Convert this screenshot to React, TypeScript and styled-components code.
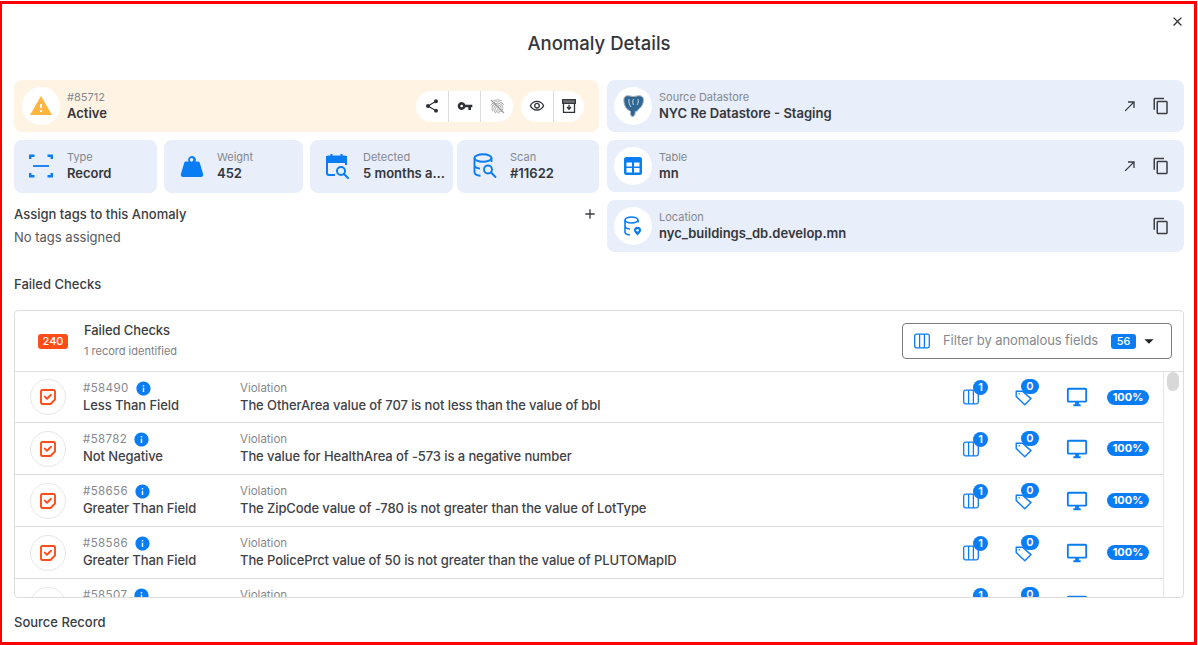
import React from "react";
import styled, { createGlobalStyle } from "styled-components";
import {
  MdAdd, MdArrowDropDown, MdCallMade, MdClose, MdContentCopy, MdInfo, MdOutlineDesktopWindows,
  MdOutlineVisibility, MdShare, MdVpnKey, MdWarning, MdFingerprint,
} from "react-icons/md";

const Global = createGlobalStyle`
  html, body { margin: 0; padding: 0; background: #fff; }
  body { font-family: "Inter", "Noto Sans", sans-serif; color: #2f3136; overflow: hidden; }
  * { box-sizing: border-box; }
`;

const BLUE = "#0A7CF4";

const Frame = styled.div`
  position: relative;
  margin-top: 1px;
  width: 1197px;
  height: 644px;
  border: solid #f00;
  border-width: 3px 3px 3px 2px;
  padding: 0 10px 0 12px;
  overflow: hidden;
`;
const Close = styled.button`
  position: absolute;
  top: 8px;
  right: 8px;
  width: 18px;
  height: 18px;
  padding: 0;
  border: 0;
  background: none;
  color: #333;
  display: flex;
  align-items: center;
  justify-content: center;
`;
const Title = styled.h1`
  margin: 0;
  height: 76px;
  padding-top: 26px;
  text-align: center;
  font-size: 18.5px;
  line-height: 26px;
  font-weight: 500;
  color: #33363b;
`;
const Columns = styled.div`
  display: grid;
  grid-template-columns: 585px 577px;
  column-gap: 8px;
  align-items: start;
`;
const Stack = styled.div`
  display: flex;
  flex-direction: column;
  gap: 8px;
`;
const Card = styled.div<{ $tone?: "blue" | "orange" }>`
  height: 52px;
  border-radius: 8px;
  background: ${(p) => (p.$tone === "orange" ? "#FFF3E3" : "#E8EEFA")};
  display: flex;
  align-items: center;
  padding: 0 14px 0 ${(p) => (p.$tone === "orange" ? 8 : 7)}px;
  gap: 7px;
`;
const Circle = styled.div`
  width: 38px;
  height: 38px;
  flex: none;
  border-radius: 50%;
  background: #fff;
  display: flex;
  align-items: center;
  justify-content: center;
`;
const Texts = styled.div`
  flex: 1;
  min-width: 0;
  display: flex;
  flex-direction: column;
  gap: 1px;
`;
const Label = styled.div`
  font-size: 11px;
  line-height: 14px;
  color: #85888e;
  white-space: nowrap;
`;
const Value = styled.div`
  font-size: 13px;
  line-height: 17px;
  font-weight: 600;
  color: #34373c;
  white-space: nowrap;
  overflow: hidden;
  text-overflow: ellipsis;
`;
const Actions = styled.div`
  display: flex;
  gap: 8px;
  margin-right: 1px;
`;
const ActionGroup = styled.div`
  display: flex;
  height: 31px;
  border-radius: 16px;
  background: #fff;
  overflow: hidden;
`;
const Action = styled.div<{ $w: number }>`
  width: ${(p) => p.$w}px;
  display: flex;
  align-items: center;
  justify-content: center;
  color: #2f3136;
  & + & { border-left: 1px solid #ddd; }
`;
const Metrics = styled.div`
  display: flex;
`;
const Metric = styled.div<{ $w: number; $after: number; $pad: number; $gap: number }>`
  width: ${(p) => p.$w}px;
  margin-right: ${(p) => p.$after}px;
  height: 53px;
  border-radius: 8px;
  background: #E8EEFA;
  display: flex;
  align-items: center;
  padding: 0 8px 1px ${(p) => p.$pad}px;
  gap: ${(p) => p.$gap}px;
  & > svg { flex: none; }
`;
const LinkIcons = styled.div`
  display: flex;
  align-items: center;
  gap: 14px;
  color: #3a3d42;
`;
const TagsBar = styled.div`
  display: flex;
  align-items: center;
  justify-content: space-between;
  height: 26px;
  padding-right: 1px;
`;
const TagsTitle = styled.div`
  font-size: 13px;
  line-height: 18px;
  font-weight: 500;
  color: #3a3d42;
`;
const TagsEmpty = styled.div`
  margin-top: 1px;
  font-size: 13px;
  line-height: 18px;
  color: #55585d;
`;
const Section = styled.div<{ $top: number }>`
  margin-top: ${(p) => p.$top}px;
  font-size: 13px;
  line-height: 20px;
  font-weight: 500;
  color: #3a3d42;
`;
const Table = styled.div`
  margin-top: 16px;
  height: 288px;
  border: 1px solid #ddd;
  border-radius: 4px;
  overflow: hidden;
  display: flex;
  flex-direction: column;
`;
const TableHead = styled.div`
  flex: none;
  height: 61px;
  border-bottom: 1px solid #ddd;
  display: flex;
  align-items: center;
  padding: 0 11px 0 23px;
`;
const Count = styled.span`
  width: 30px;
  height: 15px;
  border-radius: 3px;
  background: #FF4D1A;
  color: #fff;
  font-size: 11px;
  line-height: 15px;
  font-weight: 500;
  text-align: center;
`;
const HeadTexts = styled.div`
  flex: 1;
  margin-left: 16px;
  padding-bottom: 2px;
  display: flex;
  flex-direction: column;
  gap: 5px;
`;
const HeadTitle = styled.div`
  font-size: 13px;
  line-height: 17px;
  font-weight: 500;
  letter-spacing: -0.1px;
  color: #3a3d42;
`;
const HeadSub = styled.div`
  font-size: 11px;
  line-height: 14px;
  color: #7d8085;
`;
const Filter = styled.div`
  width: 270px;
  height: 36px;
  border: 1px solid #7b7b7b;
  border-radius: 4px;
  display: flex;
  align-items: center;
  padding: 0 11px 0 11px;
`;
const FilterText = styled.span`
  flex: 1;
  margin-left: 13px;
  padding-bottom: 2px;
  font-size: 13px;
  letter-spacing: -0.08px;
  color: #85888e;
  white-space: nowrap;
`;
const FilterCount = styled.span`
  width: 25px;
  height: 15px;
  border-radius: 3px;
  background: ${BLUE};
  color: #fff;
  font-size: 11px;
  line-height: 15px;
  font-weight: 500;
  text-align: center;
  margin-right: 2px;
`;
const Body = styled.div`
  flex: 1;
  min-height: 0;
  display: flex;
  overflow: hidden;
`;
const Rows = styled.div`
  flex: 1;
  min-width: 0;
`;
const Gutter = styled.div`
  flex: none;
  width: 20px;
  border-left: 1px solid #e6e6e6;
  padding: 0 4px 0 3px;
`;
const Thumb = styled.div`
  width: 12px;
  height: 19px;
  border-radius: 6px;
  background: #d8d8d8;
`;
const Row = styled.div`
  height: 52px;
  border-bottom: 1px solid #ddd;
  display: grid;
  grid-template-columns: 68px 157px 1fr 212px;
  align-items: center;
  &:first-child { height: 51px; }
`;
const CheckCell = styled.div`
  padding-left: 15px;
`;
const CheckCircle = styled.div`
  width: 36px;
  height: 36px;
  border-radius: 50%;
  border: 1px solid #e6e6e6;
  display: flex;
  align-items: center;
  justify-content: center;
`;
const CellStack = styled.div`
  display: flex;
  flex-direction: column;
  gap: 1px;
`;
const IdLine = styled.div`
  height: 15px;
  display: flex;
  align-items: center;
  gap: 6px;
  font-size: 11.5px;
  line-height: 15px;
  letter-spacing: 0.4px;
  color: #85888e;
`;
const RowName = styled.div`
  min-height: 17px;
  font-size: 13px;
  line-height: 17px;
  font-weight: 500;
  letter-spacing: -0.1px;
  color: #3f4247;
  white-space: nowrap;
`;
const ViolationLabel = styled.div`
  font-size: 11.5px;
  line-height: 15px;
  color: #85888e;
`;
const RowIcons = styled.div`
  height: 100%;
  display: flex;
  align-items: center;
  padding-left: 12px;
  color: ${BLUE};
`;
const IconSlot = styled.div<{ $w: number }>`
  position: relative;
  width: ${(p) => p.$w}px;
  flex: none;
  display: flex;
  align-items: center;
`;
const Bubble = styled.span<{ $left: number; $w: number }>`
  position: absolute;
  top: -9px;
  left: ${(p) => p.$left}px;
  width: ${(p) => p.$w}px;
  height: 15px;
  border-radius: 8px;
  background: ${BLUE};
  color: #fff;
  font-size: 11px;
  line-height: 15px;
  font-weight: 600;
  text-align: center;
`;
const Pill = styled.span`
  width: 42px;
  height: 15px;
  border-radius: 8px;
  background: ${BLUE};
  color: #fff;
  font-size: 11px;
  line-height: 15px;
  font-weight: 700;
  text-align: center;
`;
const FingerWrap = styled.span`
  position: relative;
  display: flex;
  color: #9a9a9a;
  & > svg:last-child { position: absolute; inset: 0; }
`;

const ColumnsIcon = ({ s = 16 }: { s?: number }) => (
  <svg width={s} height={s} viewBox="0 0 16 16" fill="none" stroke={BLUE} strokeWidth="1.3">
    <rect x="0.7" y="1.2" width="14.6" height="13.6" rx="1.8" />
    <path d="M5.6 1.2v13.6M10.4 1.2v13.6" />
  </svg>
);
const TagIcon = () => (
  <svg width="18" height="18" viewBox="0 0 18 18" fill="none" stroke={BLUE} strokeWidth="1.4" strokeLinejoin="round">
    <path d="M1.2 3.2h6.2l8.6 7.4-6.2 6.2-8.6-8.4z" />
    <circle cx="4.3" cy="5.8" r="0.8" fill={BLUE} stroke="none" />
  </svg>
);
const CheckIcon = () => (
  <svg width="16" height="16" viewBox="0 0 16 16" fill="none" stroke="#FF4D1A" strokeWidth="1.9" strokeLinejoin="round" strokeLinecap="round">
    <path d="M2.2 1h11.6a1.2 1.2 0 0 1 1.2 1.2v8.3L10.5 15H2.2A1.2 1.2 0 0 1 1 13.8V2.2A1.2 1.2 0 0 1 2.2 1z" />
    <path d="M4.8 7.6l2.2 2.1 4-3.9" />
  </svg>
);
const TypeIcon = () => (
  <svg width="24" height="24" viewBox="0 0 24 24" fill="none" stroke={BLUE} strokeWidth="2.4">
    <path d="M1.200 5V1.800h4.300M18.500 1.800h4.300V5M1.200 19v3.200h4.300M18.500 22.200h4.300V19" />
    <path d="M4 12h16" strokeWidth="1.800" />
  </svg>
);
const WeightIcon = () => (
  <svg width="24" height="21" viewBox="0 0 24 22" fill={BLUE}>
    <path fillRule="evenodd" d="M12 0a4 4 0 0 1 3.6 5.8h2.6c1 0 1.7.6 2 1.5l3.500 11.700c.4 1.600-.6 3-2.200 3H2.500c-1.600 0-2.600-1.400-2.200-3L3.800 7.300c.3-.9 1-1.500 2-1.500h2.600A4 4 0 0 1 12 0zm0 2.300a1.800 1.800 0 1 0 0 3.500 1.800 1.800 0 0 0 0-3.500z" />
  </svg>
);
const CalendarIcon = () => (
  <svg width="24" height="26" viewBox="0 0 24 26" fill="none" stroke={BLUE} strokeWidth="2">
    <path d="M9 22H3a2 2 0 0 1-2-2V5a1.500 1.500 0 0 1 1.500-1.500h16A1.500 1.500 0 0 1 20 5v7" />
    <path d="M1 4h19v5H1z" fill={BLUE} />
    <path d="M5.500 1v3M15.500 1v3" />
    <circle cx="15" cy="18" r="4" />
    <path d="M18 21l4 4" strokeLinecap="round" />
  </svg>
);
const ScanIcon = () => (
  <svg width="24" height="26" viewBox="0 0 24 26" fill="none" stroke={BLUE} strokeWidth="1.9">
    <ellipse cx="10" cy="5" rx="8.500" ry="3.800" />
    <path d="M1.500 5v14c0 2 2.500 3.500 6 3.700M18.500 5v4M1.500 12c0 2 2.300 3.300 5.500 3.600" />
    <circle cx="15" cy="16.500" r="4" />
    <path d="M18 19.500l4.500 4.500" strokeLinecap="round" />
  </svg>
);
const PgIcon = () => (
  <svg width="21" height="23" viewBox="0 0 21 23">
    <path d="M3 1c3-1 5 .5 7.500.5S15 0 18 1s3 5 1.500 8.500-4 4-4.500 5.500-1.500 1.500-2.500 1c-.3 2-.5 4-1.500 5s-3.500.5-3.500-2 0-3-1-3.500S2.500 13.500 1.500 9.500 .5 2 3 1z" fill="#2F6792" stroke="#a8b4c0" strokeWidth="1" />
    <path d="M6 4c-.5 3 .5 6 2 8M10.500 4c-1 2-1 4 0 6M15 4c.7 2 .3 4-1 6" stroke="#dbe6ef" strokeWidth="0.9" fill="none" />
  </svg>
);
const TableIcon = () => (
  <svg width="18" height="18" viewBox="0 0 18 18">
    <rect width="18" height="18" rx="2.500" fill={BLUE} />
    <path d="M2.500 5.500h5.500v4H2.500zM10 5.500h5.500v4H10zM2.500 11h5.500v4.500H2.500zM10 11h5.500v4.500H10z" fill="#fff" />
  </svg>
);
const LocationIcon = () => (
  <svg width="18" height="20" viewBox="0 0 18 20" fill="none" stroke={BLUE} strokeWidth="1.600">
    <ellipse cx="7.500" cy="4" rx="6.500" ry="3" />
    <path d="M1 4v12c0 1.600 2 2.700 5 3M14 4v2.500M1 10c0 1.600 2 2.700 5 3" />
    <path d="M13.500 19.500c-2-2-3.500-3.500-3.500-5.200a3.500 3.500 0 0 1 7 0c0 1.700-1.500 3.200-3.500 5.200z" fill={BLUE} stroke="none" />
    <circle cx="13.500" cy="14.300" r="1.200" fill="#fff" stroke="none" />
  </svg>
);
const ArchiveIcon = () => (
  <svg width="14" height="14" viewBox="0 0 14 14" fill="none" stroke="#2f3136" strokeWidth="1.300">
    <rect x="0.700" y="0.700" width="12.600" height="3.600" fill="#777" />
    <path d="M1.500 4.300v9h11v-9" />
    <path d="M7 5.800v4M5 8l2 2.200L9 8" />
  </svg>
);
const FingerOff = () => (
  <FingerWrap>
    <MdFingerprint size={17} />
    <svg width="17" height="17" viewBox="0 0 17 17">
      <path d="M2 2l13 13" stroke="#9a9a9a" strokeWidth="1.100" />
    </svg>
  </FingerWrap>
);

const rows = [
  { id: "#58490", name: "Less Than Field", text: "The OtherArea value of 707 is not less than the value of bbl" },
  { id: "#58782", name: "Not Negative", text: "The value for HealthArea of -573 is a negative number" },
  { id: "#58656", name: "Greater Than Field", text: "The ZipCode value of -780 is not greater than the value of LotType" },
  { id: "#58586", name: "Greater Than Field", text: "The PolicePrct value of 50 is not greater than the value of PLUTOMapID" },
  { id: "#58507", name: "", text: "" },
];

export default function App() {
  return (
    <Frame>
      <Global />
      <Close><MdClose size={15} /></Close>
      <Title>Anomaly Details</Title>
      <Columns>
        <Stack>
          <Card $tone="orange">
            <Circle><MdWarning size={24} color="#FFB53F" /></Circle>
            <Texts>
              <Label>#85712</Label>
              <Value>Active</Value>
            </Texts>
            <Actions>
              <ActionGroup>
                <Action $w={32}><MdShare size={16} /></Action>
                <Action $w={32}><MdVpnKey size={16} /></Action>
                <Action $w={33}><FingerOff /></Action>
              </ActionGroup>
              <ActionGroup>
                <Action $w={32}><MdOutlineVisibility size={16} /></Action>
                <Action $w={31}><ArchiveIcon /></Action>
              </ActionGroup>
            </Actions>
          </Card>
          <Metrics>
            <Metric $w={143} $after={7} $pad={15} $gap={14}>
              <TypeIcon />
              <Texts><Label>Type</Label><Value>Record</Value></Texts>
            </Metric>
            <Metric $w={139} $after={7} $pad={16} $gap={13}>
              <WeightIcon />
              <Texts><Label>Weight</Label><Value>452</Value></Texts>
            </Metric>
            <Metric $w={143} $after={4} $pad={16} $gap={13}>
              <CalendarIcon />
              <Texts><Label>Detected</Label><Value>5 months ago</Value></Texts>
            </Metric>
            <Metric $w={142} $after={0} $pad={16} $gap={13}>
              <ScanIcon />
              <Texts><Label>Scan</Label><Value>#11622</Value></Texts>
            </Metric>
          </Metrics>
          <div>
            <TagsBar>
              <TagsTitle>Assign tags to this Anomaly</TagsTitle>
              <MdAdd size={16} color="#3a3d42" />
            </TagsBar>
            <TagsEmpty>No tags assigned</TagsEmpty>
          </div>
        </Stack>
        <Stack>
          <Card>
            <Circle><PgIcon /></Circle>
            <Texts><Label>Source Datastore</Label><Value>NYC Re Datastore - Staging</Value></Texts>
            <LinkIcons><MdCallMade size={16} /><MdContentCopy size={18} /></LinkIcons>
          </Card>
          <Card>
            <Circle><TableIcon /></Circle>
            <Texts><Label>Table</Label><Value>mn</Value></Texts>
            <LinkIcons><MdCallMade size={16} /><MdContentCopy size={18} /></LinkIcons>
          </Card>
          <Card>
            <Circle><LocationIcon /></Circle>
            <Texts><Label>Location</Label><Value>nyc_buildings_db.develop.mn</Value></Texts>
            <LinkIcons><MdContentCopy size={18} /></LinkIcons>
          </Card>
        </Stack>
      </Columns>
      <Section $top={22}>Failed Checks</Section>
      <Table>
        <TableHead>
          <Count>240</Count>
          <HeadTexts>
            <HeadTitle>Failed Checks</HeadTitle>
            <HeadSub>1 record identified</HeadSub>
          </HeadTexts>
          <Filter>
            <ColumnsIcon />
            <FilterText>Filter by anomalous fields</FilterText>
            <FilterCount>56</FilterCount>
            <MdArrowDropDown size={22} color="#222" />
          </Filter>
        </TableHead>
        <Body>
          <Rows>
            {rows.map((r) => (
              <Row key={r.id}>
                <CheckCell><CheckCircle><CheckIcon /></CheckCircle></CheckCell>
                <CellStack>
                  <IdLine>{r.id}<MdInfo size={17} color={BLUE} /></IdLine>
                  <RowName>{r.name}</RowName>
                </CellStack>
                <CellStack>
                  <ViolationLabel>Violation</ViolationLabel>
                  <RowName>{r.text}</RowName>
                </CellStack>
                <RowIcons>
                  <IconSlot $w={52}><ColumnsIcon /><Bubble $left={10} $w={15}>1</Bubble></IconSlot>
                  <IconSlot $w={51}><TagIcon /><Bubble $left={6} $w={18}>0</Bubble></IconSlot>
                  <IconSlot $w={41}><MdOutlineDesktopWindows size={22} /></IconSlot>
                  <Pill>100%</Pill>
                </RowIcons>
              </Row>
            ))}
          </Rows>
          <Gutter><Thumb /></Gutter>
        </Body>
      </Table>
      <Section $top={14}>Source Record</Section>
    </Frame>
  );
}
